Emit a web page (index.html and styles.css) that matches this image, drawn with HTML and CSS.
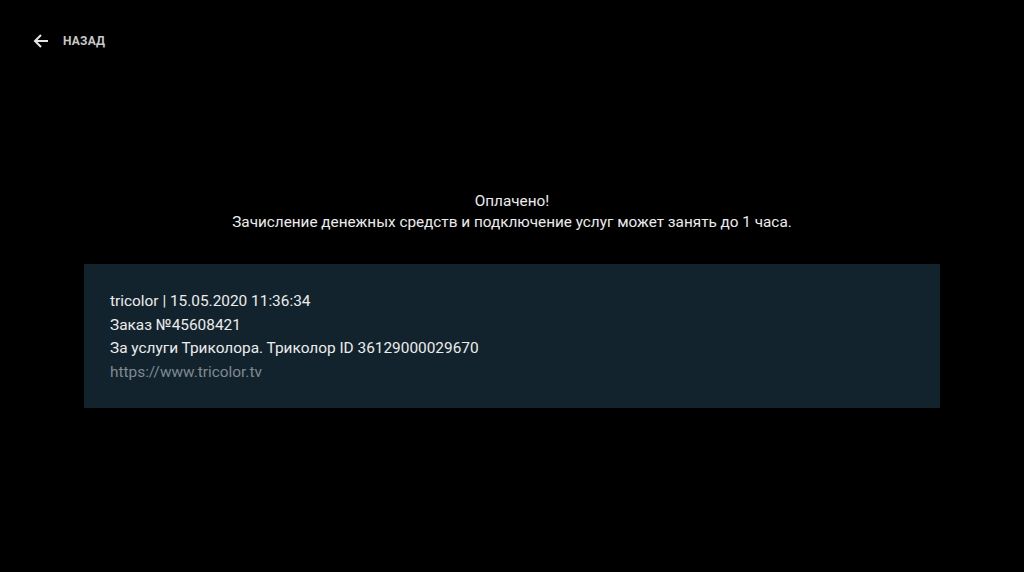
FILE: index.html
```html
<!DOCTYPE html>
<html lang="ru">
<head>
    <meta charset="UTF-8">
    <meta name="viewport" content="width=device-width, initial-scale=1.0">
    <title>Оплачено</title>
    <link rel="stylesheet" href="styles.css">
</head>
<body>
    <div class="header">
        <svg class="back-icon" width="16" height="16" viewBox="0 0 16 16">
            <path d="M15 8H2M8 2L2 8l6 6" fill="none" stroke="#e6e6e6" stroke-width="2"/>
        </svg>
        <span class="back-label">НАЗАД</span>
    </div>

    <div class="message">
        <p>Оплачено!</p>
        <p>Зачисление денежных средств и подключение услуг может занять до 1 часа.</p>
    </div>

    <div class="receipt">
        <p>tricolor | 15.05.2020 11:36:34</p>
        <p>Заказ №45608421</p>
        <p>За услуги Триколора. Триколор ID 36129000029670</p>
        <p class="link">https://www.tricolor.tv</p>
    </div>
</body>
</html>
```

FILE: styles.css
```css
body, html {
    margin: 0;
    padding: 0;
    height: 100%;
    background: #000;
    font-family: Roboto, "Noto Sans", sans-serif;
    color: #ececec;
}
p {
    margin: 0;
}
.header {
    display: flex;
    align-items: center;
    padding: 33px 0 0 33px;
    height: 16px;
}
.back-icon {
    display: block;
}
.back-label {
    margin-left: 14px;
    font-size: 12px;
    font-weight: bold;
    color: #c8c8c8;
    letter-spacing: 0.2px;
}
.message {
    margin-top: 142px;
    text-align: center;
    font-size: 15.3px;
    line-height: 21px;
}
.receipt {
    margin: 31px 84px 0 84px;
    background-color: #13232d;
    padding: 26px 26px 23px 26px;
    font-size: 15.4px;
    line-height: 23.5px;
    height: 95px;
}
.link {
    color: #7f8a91;
}
```
